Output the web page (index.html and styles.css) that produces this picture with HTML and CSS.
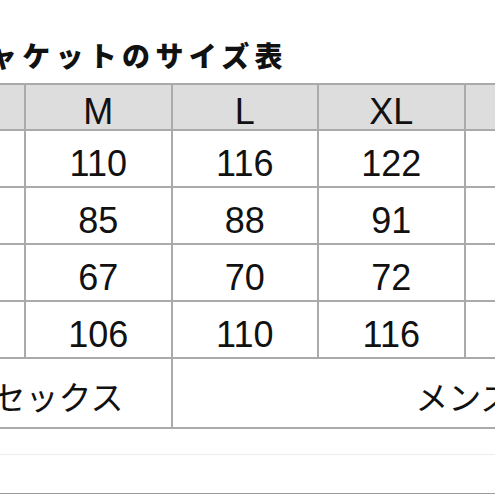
FILE: index.html
```html
<!DOCTYPE html>
<html lang="ja">
<head>
<meta charset="utf-8">
<link rel="stylesheet" href="styles.css">
</head>
<body>
<div class="page">
  <h1 class="title">ジャケットのサイズ表</h1>
  <div class="grid">
    <div class="cell head"></div>
    <div class="cell head">M</div>
    <div class="cell head">L</div>
    <div class="cell head">XL</div>
    <div class="cell head">XXL</div>
    <div class="cell head">3XL</div>

    <div class="cell data jp">身幅</div>
    <div class="cell data">110</div>
    <div class="cell data">116</div>
    <div class="cell data">122</div>
    <div class="cell data">128</div>
    <div class="cell data">134</div>

    <div class="cell data jp">着丈</div>
    <div class="cell data">85</div>
    <div class="cell data">88</div>
    <div class="cell data">91</div>
    <div class="cell data">94</div>
    <div class="cell data">97</div>

    <div class="cell data jp">袖丈</div>
    <div class="cell data">67</div>
    <div class="cell data">70</div>
    <div class="cell data">72</div>
    <div class="cell data">74</div>
    <div class="cell data">76</div>

    <div class="cell data jp">胸囲</div>
    <div class="cell data">106</div>
    <div class="cell data">110</div>
    <div class="cell data">116</div>
    <div class="cell data">122</div>
    <div class="cell data">128</div>

    <div class="cell foot span2">ユニセックス</div>
    <div class="cell foot span4">メンズ</div>
  </div>
  <div class="rule-light"></div>
  <div class="rule-dark"></div>
</div>
</body>
</html>
```
FILE: styles.css
```css
html, body {
  margin: 0;
  padding: 0;
  background: #ffffff;
}
body {
  overflow: hidden;
  width: 495px;
  height: 495px;
}
.page {
  width: 495px;
  color: #111111;
}
.title {
  margin: 0 0 14px -43px;
  padding-top: 41px;
  font-family: "Noto Sans CJK JP", sans-serif;
  font-weight: 900;
  font-size: 28px;
  line-height: 28px;
  letter-spacing: 5.3px;
  white-space: nowrap;
}
.grid {
  display: grid;
  grid-template-columns: repeat(6, 144.5px);
  grid-template-rows: 44px 55px 55px 55px 55px 68px;
  gap: 2px;
  padding: 2px;
  background: #aaaaaa;
  width: max-content;
  margin-left: -122.5px;
}
.cell {
  background: #ffffff;
  display: flex;
  justify-content: center;
  align-items: center;
  font-family: "Liberation Sans", "Noto Sans CJK JP", sans-serif;
  font-size: 36px;
  line-height: 36px;
  box-sizing: border-box;
  white-space: nowrap;
}
.head {
  background: #dddddd;
  padding-top: 9px;
}
.data {
  padding-top: 11px;
}
.jp {
  font-family: "Noto Sans CJK JP", sans-serif;
  font-size: 33px;
  line-height: 33px;
}
.foot {
  font-family: "Noto Sans CJK JP", sans-serif;
  font-size: 33px;
  line-height: 33px;
  padding-top: 7px;
}
.span2 {
  grid-column: span 2;
}
.span4 {
  grid-column: span 4;
}
.rule-light {
  height: 25px;
  border-bottom: 1px solid #ececec;
}
.rule-dark {
  height: 38px;
  border-bottom: 1px solid #9a9a9a;
}
```
